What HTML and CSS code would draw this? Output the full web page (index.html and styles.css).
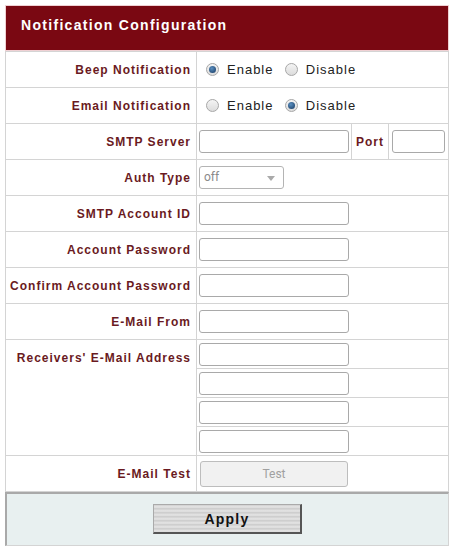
FILE: index.html
```html
<!DOCTYPE html>
<html lang="en">
<head>
    <meta charset="UTF-8">
    <title>Notification Configuration</title>
    <link rel="stylesheet" href="styles.css">
</head>
<body>
    <div class="panel">
        <div class="panel-header">Notification Configuration</div>
        <table class="config">
            <tr>
                <th>Beep Notification</th>
                <td colspan="3">
                    <span class="radio on"></span><span class="opt">Enable</span>
                    <span class="radio"></span><span class="opt">Disable</span>
                </td>
            </tr>
            <tr>
                <th>Email Notification</th>
                <td colspan="3">
                    <span class="radio"></span><span class="opt">Enable</span>
                    <span class="radio on"></span><span class="opt">Disable</span>
                </td>
            </tr>
            <tr>
                <th>SMTP Server</th>
                <td class="server"><input type="text" class="field"></td>
                <th class="port-label">Port</th>
                <td class="port"><input type="text" class="field small"></td>
            </tr>
            <tr>
                <th>Auth Type</th>
                <td colspan="3">
                    <div class="select">off<span class="caret"></span></div>
                </td>
            </tr>
            <tr>
                <th>SMTP Account ID</th>
                <td colspan="3"><input type="text" class="field"></td>
            </tr>
            <tr>
                <th>Account Password</th>
                <td colspan="3"><input type="password" class="field"></td>
            </tr>
            <tr>
                <th>Confirm Account Password</th>
                <td colspan="3"><input type="password" class="field"></td>
            </tr>
            <tr>
                <th>E-Mail From</th>
                <td colspan="3"><input type="text" class="field"></td>
            </tr>
            <tr class="sub">
                <th rowspan="4" class="top">Receivers' E-Mail Address</th>
                <td colspan="3"><input type="text" class="field"></td>
            </tr>
            <tr class="sub"><td colspan="3"><input type="text" class="field"></td></tr>
            <tr class="sub"><td colspan="3"><input type="text" class="field"></td></tr>
            <tr class="sub"><td colspan="3"><input type="text" class="field"></td></tr>
            <tr>
                <th>E-Mail Test</th>
                <td colspan="3"><button class="test" type="button">Test</button></td>
            </tr>
        </table>
        <div class="panel-footer">
            <button class="apply" type="button">Apply</button>
        </div>
    </div>
</body>
</html>
```
FILE: styles.css
```css
body {
    margin: 0;
    padding: 5px;
    background-color: #fff;
    font-family: "Liberation Sans", Arial, sans-serif;
}

.panel {
    width: 444px;
}

.panel-header {
    background-color: #7a0812;
    color: #fff;
    font-size: 14px;
    font-weight: bold;
    letter-spacing: 1.3px;
    height: 46px;
    line-height: 39px;
    padding-left: 15px;
    border: 1px solid #f0d0d3;
    box-sizing: border-box;
}

.config {
    width: 444px;
    border-collapse: collapse;
    border-left: 1px solid #d4d4d4;
    border-right: 1px solid #d4d4d4;
}

.config th,
.config td {
    border: 1px solid #d4d4d4;
    height: 35px;
    padding: 0 2px;
    font-size: 12px;
    vertical-align: middle;
}

.config th {
    width: 183px;
    text-align: right;
    padding-right: 5px;
    color: #6a1a22;
    letter-spacing: 1px;
    white-space: nowrap;
}

.config th.top {
    vertical-align: top;
    padding-top: 11px;
}

.config tr.sub td {
    height: 28px;
}

.config td.server {
    width: 150px;
}

.config th.port-label {
    width: 30px;
    text-align: center;
    padding: 0 3px;
}

.config td.port {
    padding: 0 3px;
}

.config td {
    color: #222;
    letter-spacing: 1px;
}

.field {
    box-sizing: border-box;
    width: 150px;
    height: 23px;
    border: 1px solid #a9a9a9;
    border-radius: 3px;
    margin: 0;
    display: block;
}

.field.small {
    width: 53px;
}

.radio {
    display: inline-block;
    width: 11px;
    height: 11px;
    border-radius: 50%;
    border: 1px solid #a8a8a8;
    background: linear-gradient(#f4f4f4, #dcdcdc);
    vertical-align: -2px;
    margin: 0 8px 0 7px;
    position: relative;
}

.radio.on::after {
    content: "";
    position: absolute;
    left: 2px;
    top: 2px;
    width: 7px;
    height: 7px;
    border-radius: 50%;
    background: radial-gradient(circle at 40% 35%, #5a8fc0, #15375f);
}

.opt {
    font-size: 13px;
    letter-spacing: 1px;
}

.select {
    box-sizing: border-box;
    width: 85px;
    height: 23px;
    border: 1px solid #b4b4b4;
    border-radius: 3px;
    color: #8a8a8a;
    font-family: Roboto, sans-serif;
    letter-spacing: 0;
    padding-left: 4px;
    line-height: 21px;
    position: relative;
}

.caret {
    position: absolute;
    right: 8px;
    top: 9px;
    border-left: 4px solid transparent;
    border-right: 4px solid transparent;
    border-top: 5px solid #aaa;
}

.test {
    width: 148px;
    height: 26px;
    margin-left: 1px;
    border: 1px solid #bdbdbd;
    border-radius: 3px;
    background-color: #f1f1f1;
    color: #a0a0a0;
    font-family: Roboto, sans-serif;
    font-size: 12px;
    display: block;
}

.panel-footer {
    background-color: #e8f0f0;
    border: 1px solid #d4d4d4;
    border-top: 2px solid #a9a9a9;
    border-left: 2px solid #a9a9a9;
    height: 54px;
    box-sizing: border-box;
    padding-top: 10px;
    text-align: center;
}

.apply {
    width: 149px;
    height: 30px;
    border: 1px solid #aaa;
    border-right: 2px solid #555;
    border-bottom: 2px solid #555;
    background: repeating-linear-gradient(#cfcfcf 0, #e6e6e6 2px, #c6c6c6 4px);
    font-family: "Liberation Sans", Arial, sans-serif;
    font-size: 14px;
    font-weight: bold;
    letter-spacing: 1.2px;
    color: #111;
}
```
